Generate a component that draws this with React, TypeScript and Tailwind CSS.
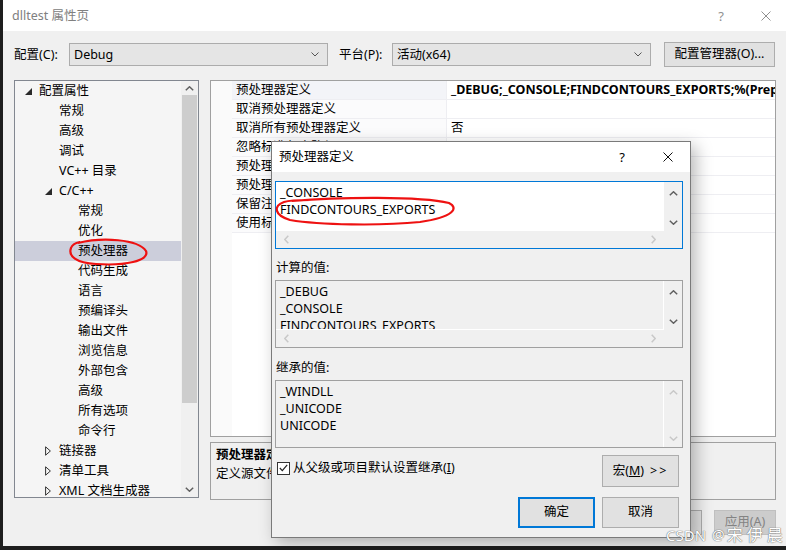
import React from "react";

const F = "font-['Noto_Sans','Noto_Sans_CJK_SC',sans-serif]";

type Dir = "up" | "down" | "left" | "right";
function Arrow({ dir, color = "#606060", sw = 1.5 }: { dir: Dir; color?: string; sw?: number }) {
  const vert = dir === "up" || dir === "down";
  const w = vert ? 9 : 5;
  const h = vert ? 5 : 9;
  const pts =
    dir === "up"
      ? "0.8,4.3 4.5,0.8 8.2,4.3"
      : dir === "down"
      ? "0.8,0.7 4.5,4.2 8.2,0.7"
      : dir === "left"
      ? "4.3,0.8 0.8,4.5 4.3,8.2"
      : "0.7,0.8 4.2,4.5 0.7,8.2";
  return (
    <svg width={w} height={h} viewBox={`0 0 ${w} ${h}`} className="block">
      <polyline points={pts} fill="none" stroke={color} strokeWidth={sw} />
    </svg>
  );
}

function XIcon({ color, size = 10 }: { color: string; size?: number }) {
  return (
    <svg width={size} height={size} viewBox={`0 0 ${size} ${size}`} className="block">
      <line x1="0.5" y1="0.5" x2={size - 0.5} y2={size - 0.5} stroke={color} strokeWidth="1" />
      <line x1={size - 0.5} y1="0.5" x2="0.5" y2={size - 0.5} stroke={color} strokeWidth="1" />
    </svg>
  );
}

function Combo({ text }: { text: string }) {
  return (
    <div className="flex h-[23px] w-[259px] items-center justify-between border border-[#acacac] bg-[#e5e5e5] pl-[4px] pr-[8px]">
      <span className="text-[12.5px] leading-[16px] text-black">{text}</span>
      <svg width="8" height="5" viewBox="0 0 8 5" className="block">
        <polyline points="0.5,0.5 4,4 7.5,0.5" fill="none" stroke="#555" strokeWidth="1" />
      </svg>
    </div>
  );
}

type TreeRow = { t: string; lvl: 0 | 1 | 2; tri?: "open" | "closed"; sel?: boolean };
const tree: TreeRow[] = [
  { t: "配置属性", lvl: 0, tri: "open" },
  { t: "常规", lvl: 1 },
  { t: "高级", lvl: 1 },
  { t: "调试", lvl: 1 },
  { t: "VC++ 目录", lvl: 1 },
  { t: "C/C++", lvl: 1, tri: "open" },
  { t: "常规", lvl: 2 },
  { t: "优化", lvl: 2 },
  { t: "预处理器", lvl: 2, sel: true },
  { t: "代码生成", lvl: 2 },
  { t: "语言", lvl: 2 },
  { t: "预编译头", lvl: 2 },
  { t: "输出文件", lvl: 2 },
  { t: "浏览信息", lvl: 2 },
  { t: "外部包含", lvl: 2 },
  { t: "高级", lvl: 2 },
  { t: "所有选项", lvl: 2 },
  { t: "命令行", lvl: 2 },
  { t: "链接器", lvl: 1, tri: "closed" },
  { t: "清单工具", lvl: 1, tri: "closed" },
  { t: "XML 文档生成器", lvl: 1, tri: "closed" },
];
const padCls = ["pl-[10px]", "pl-[30px]", "pl-[49px]"];

function Tri({ kind }: { kind?: "open" | "closed" }) {
  return (
    <div className="flex w-[14px] shrink-0 items-center">
      {kind === "open" && (
        <svg width="7" height="7" viewBox="0 0 7 7" className="block">
          <polygon points="7,0 7,7 0,7" fill="#2a2a2a" />
        </svg>
      )}
      {kind === "closed" && (
        <svg width="6" height="10" viewBox="0 0 6 10" className="block">
          <polygon points="0.6,0.8 5.4,5 0.6,9.2" fill="none" stroke="#333" strokeWidth="1" />
        </svg>
      )}
    </div>
  );
}

const props: [string, string, boolean?][] = [
  ["预处理器定义", "_DEBUG;_CONSOLE;FINDCONTOURS_EXPORTS;%(PreprocessorDefinitions)", true],
  ["取消预处理器定义", ""],
  ["取消所有预处理器定义", "否"],
  ["忽略标准包含路径", "否"],
  ["预处理到文件", "否"],
  ["预处理取消显示行号", "否"],
  ["保留注释", "否"],
  ["使用标准符合性预处理器", ""],
];

function WinBtn({ children, className = "" }: { children: React.ReactNode; className?: string }) {
  return (
    <div
      className={`flex items-center justify-center border border-[#adadad] bg-[#e1e1e1] text-[12.5px] text-black ${className}`}
    >
      {children}
    </div>
  );
}

function ListBox({
  lines,
  hscroll,
  active,
  disabledArrows,
}: {
  lines: string[];
  hscroll: boolean;
  active?: boolean;
  disabledArrows?: boolean;
}) {
  const vColor = disabledArrows ? "#c8c8c8" : "#606060";
  return (
    <div
      className={`flex h-[68px] w-[408px] flex-col overflow-hidden border ${
        active ? "border-[#0078d7]" : "border-[#a0a0a0]"
      } bg-[#f0f0f0]`}
    >
      <div className="flex min-h-0 flex-1">
        <div
          className={`flex-1 overflow-hidden pl-[4px] pt-[2px] ${
            active ? "bg-white" : "border-r border-b border-white bg-[#f0f0f0]"
          } ${hscroll ? "" : "border-b-0"}`}
        >
          {lines.map((l, i) => (
            <div key={i} className="h-[17px] whitespace-nowrap text-[12.5px] leading-[17px] text-black">
              {l}
            </div>
          ))}
        </div>
        <div className="flex w-[18px] shrink-0 flex-col items-center justify-between pt-[9px] pb-[6px]">
          <Arrow dir="up" color={vColor} />
          <Arrow dir="down" color={vColor} />
        </div>
      </div>
      {hscroll && (
        <div className="flex h-[17px] shrink-0 items-center justify-between pl-[8px] pr-[26px]">
          <Arrow dir="left" color="#c8c8c8" />
          <Arrow dir="right" color="#c8c8c8" />
        </div>
      )}
    </div>
  );
}

export default function App() {
  return (
    <div className={`relative flex h-[550px] w-[786px] flex-col overflow-hidden bg-[#1e1e1e] ${F}`}>
      {/* main window */}
      <div className="ml-[3px] flex h-[546px] w-[783px] flex-col bg-[#f0f0f0]">
        {/* title bar */}
        <div className="flex h-[31px] shrink-0 items-center bg-white pl-[9px]">
          <span className="text-[12.5px] leading-[16px] text-[#808080]">dlltest 属性页</span>
          <div className="flex-1" />
          <span className="mr-[37px] text-[13px] leading-[16px] text-[#909090]">?</span>
          <div className="mr-[15px]">
            <XIcon color="#909090" />
          </div>
        </div>

        {/* config row */}
        <div className="mt-[11px] flex h-[25px] items-center pl-[11px]">
          <span className="w-[55px] text-[12.5px] leading-[16px] text-black">配置(C):</span>
          <Combo text="Debug" />
          <span className="ml-[11px] w-[53px] text-[12.5px] leading-[16px] text-black">平台(P):</span>
          <Combo text="活动(x64)" />
          <WinBtn className="ml-[13px] h-[25px] w-[111px]">配置管理器(O)...</WinBtn>
        </div>

        {/* main area */}
        <div className="mt-[13px] flex h-[420px] pl-[11px]">
          {/* tree */}
          <div className="flex h-[418px] w-[185px] border border-[#828790] bg-[#f5f5f5]">
            <div className="flex-1 overflow-hidden">
              {tree.map((r, i) => (
                <div
                  key={i}
                  className={`flex h-[20px] items-center ${padCls[r.lvl]} ${r.sel ? "bg-[#cccedb]" : ""}`}
                >
                  <Tri kind={r.tri} />
                  <span className="whitespace-nowrap text-[12.5px] leading-[16px] text-black">{r.t}</span>
                </div>
              ))}
            </div>
            <div className="flex w-[17px] shrink-0 flex-col items-center bg-[#f0f0f0]">
              <div className="flex h-[14px] items-center">
                <Arrow dir="up" color="#606060" />
              </div>
              <div className="h-[308px] w-[15px] bg-[#cdcdcd]" />
              <div className="flex-1" />
              <div className="flex h-[14px] items-center pb-[2px]">
                <Arrow dir="down" color="#606060" />
              </div>
            </div>
          </div>

          {/* right column */}
          <div className="ml-[11px] flex w-[566px] flex-col">
            <div className="flex h-[357px] border border-[#a0a0a0] bg-white">
              <div className="w-[21px] shrink-0 bg-[#fafafa]" />
              <div className="flex flex-1 flex-col overflow-hidden">
                {props.map(([n, v, bold], i) => (
                  <div key={i} className="flex h-[19px] border-b border-[#eeeef2]">
                    <div
                      className={`flex w-[215px] shrink-0 items-center border-r border-[#eeeef2] pl-[4px] ${
                        i === 0 ? "bg-[#f3f4f8]" : "bg-[#fbfbfc]"
                      }`}
                    >
                      <span className="whitespace-nowrap text-[12.5px] leading-[16px] text-black">{n}</span>
                    </div>
                    <div className="flex flex-1 items-center overflow-hidden pl-[4px]">
                      <span
                        className={`whitespace-nowrap text-[12.5px] leading-[16px] text-black ${
                          bold ? "font-bold" : ""
                        }`}
                      >
                        {v}
                      </span>
                    </div>
                  </div>
                ))}
              </div>
            </div>
            <div className="mt-[5px] flex h-[58px] flex-col border border-[#a0a0a0] bg-[#f0f0f0] pl-[5px] pt-[2px]">
              <span className="text-[12.5px] font-bold leading-[19px] text-black">预处理器定义</span>
              <span className="text-[12.5px] leading-[19px] text-black">定义源文件的预处理符号。</span>
            </div>
          </div>
        </div>

        {/* bottom buttons */}
        <div className="mt-[10px] flex justify-end gap-[12px] pr-[10px]">
          <WinBtn className="h-[25px] w-[62px]">确定</WinBtn>
          <WinBtn className="h-[25px] w-[62px]">取消</WinBtn>
          <div className="flex h-[25px] w-[62px] items-center justify-center border border-[#bfbfbf] bg-[#cccccc] text-[12.5px] text-[#838383]">
            应用(A)
          </div>
        </div>
      </div>

      {/* modal dialog */}
      <div className="absolute left-[271px] top-[141px] flex h-[397px] w-[420px] flex-col border border-[#7a7a7a] bg-[#f0f0f0] shadow-[5px_5px_16px_rgba(0,0,0,0.28)]">
        <div className="flex h-[30px] shrink-0 items-center bg-white pl-[7px]">
          <span className="text-[12.5px] leading-[16px] text-black">预处理器定义</span>
          <div className="flex-1" />
          <span className="mr-[38px] text-[13px] leading-[16px] text-black">?</span>
          <div className="mr-[17px]">
            <XIcon color="#111" />
          </div>
        </div>
        <div className="flex flex-col pl-[3px] pr-[7px] pt-[9px]">
          <ListBox lines={["_CONSOLE", "FINDCONTOURS_EXPORTS"]} hscroll active />
          <div className="mt-[9px] h-[20px] pl-[1px] text-[12.5px] leading-[20px] text-black">计算的值:</div>
          <div className="mt-[2px]">
            <ListBox lines={["_DEBUG", "_CONSOLE", "FINDCONTOURS_EXPORTS"]} hscroll />
          </div>
          <div className="mt-[10px] h-[20px] pl-[1px] text-[12.5px] leading-[20px] text-black">继承的值:</div>
          <div className="mt-[2px]">
            <ListBox lines={["_WINDLL", "_UNICODE", "UNICODE"]} hscroll={false} disabledArrows />
          </div>
          <div className="mt-[7px] flex items-start justify-between pr-[4px]">
            <div className="flex items-center pl-[2px] pt-[5px]">
              <div className="flex h-[13px] w-[13px] items-center justify-center border border-[#333] bg-white">
                <svg width="9" height="8" viewBox="0 0 9 8" className="block">
                  <polyline points="0.8,4 3.3,6.6 8.2,0.8" fill="none" stroke="#222" strokeWidth="1.2" />
                </svg>
              </div>
              <span className="ml-[3px] text-[12.5px] leading-[16px] text-black">
                从父级或项目默认设置继承(<span className="underline">I</span>)
              </span>
            </div>
            <WinBtn className="h-[32px] w-[77px]">
              宏(<span className="underline">M</span>)<span className="ml-[6px] tracking-[2px]">&gt;&gt;</span>
            </WinBtn>
          </div>
          <div className="mt-[10px] flex justify-end gap-[7px] pr-[4px]">
            <div className="flex h-[31px] w-[77px] items-center justify-center border-2 border-[#0078d7] bg-[#e1e1e1] text-[12.5px] text-black">
              确定
            </div>
            <WinBtn className="h-[31px] w-[77px]">取消</WinBtn>
          </div>
        </div>
      </div>

      {/* red annotation marks */}
      <svg className="pointer-events-none absolute left-0 top-0" width="786" height="550" viewBox="0 0 786 550">
        <path
          d="M 78 243 C 102 237, 138 239, 146 251 C 150 261, 124 266, 96 264 C 76 263, 68 256, 71 248 C 72 245, 75 243, 80 242"
          fill="none"
          stroke="#ee1111"
          strokeWidth="2.2"
        />
        <path
          d="M 292 201 C 340 197, 420 196, 449 203 C 459 208, 454 217, 420 222 C 380 226, 320 225, 290 220 C 274 215, 273 206, 284 202 C 290 200, 300 200, 310 200"
          fill="none"
          stroke="#ee1111"
          strokeWidth="2.2"
        />
      </svg>

      {/* watermark */}
      <div className="pointer-events-none absolute left-[666px] top-[525px] flex h-[20px] w-[130px] items-center whitespace-nowrap leading-[20px] text-white [text-shadow:0_0_1px_#666,0_0_1px_#666]">
        <span className="shrink-0 text-[15px]">CSDN</span>
        <span className="ml-[6px] shrink-0 text-[14px]">@</span>
        <span className="ml-[2px] shrink-0 text-[16px] tracking-[4px]">宋伊晨</span>
      </div>
    </div>
  );
}
